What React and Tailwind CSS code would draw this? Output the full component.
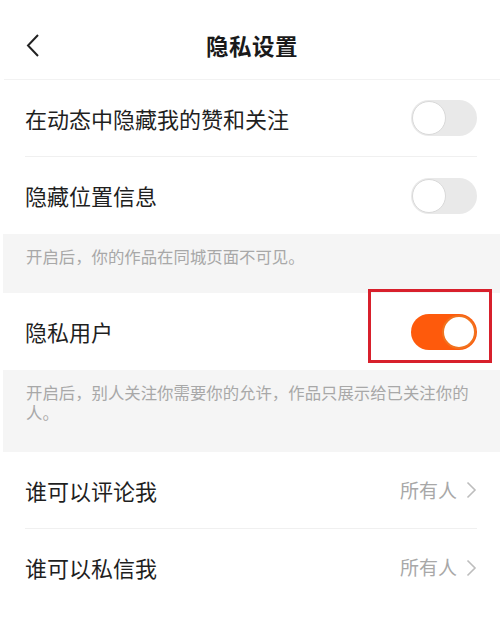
const font = { fontFamily: '"Noto Sans CJK SC", "Noto Sans", sans-serif' };

const Toggle = ({ on }) => {
  if (on) {
    return (
      <div className="w-[66px] h-[36px] rounded-full bg-[#fe5a0c] flex items-center justify-end p-[1px]">
        <div className="w-[34px] h-[34px] rounded-full bg-white border-2 border-[#f0731f]" />
      </div>
    );
  }
  return (
    <div className="w-[66px] h-[36px] rounded-full bg-[#e9e9e9] flex items-center p-[1px]">
      <div className="w-[34px] h-[34px] rounded-full bg-white border border-[#d9d9d9]" />
    </div>
  );
};

const Row = ({ label, children, divider }) => (
  <div className="pl-[25px] pr-[23px] bg-white">
    <div
      className={
        "h-[77px] flex items-center justify-between " +
        (divider ? "border-b border-[#f0f0f0]" : "")
      }
    >
      <span className="text-[22px] text-[#1f1f1f]">{label}</span>
      {children}
    </div>
  </div>
);

const Note = ({ children, h }) => (
  <div className={"ml-[3px] bg-[#f5f5f5] pl-[23px] pr-[20px] pt-[12px] " + h}>
    <p className="text-[16.4px] leading-[20px] text-[#a8a8a8]">{children}</p>
  </div>
);

const Value = () => (
  <div className="flex items-center gap-[9px] text-[19px] text-[#a8a8a8]">
    <span>所有人</span>
    <svg width="11" height="18" viewBox="0 0 11 18" fill="none">
      <path d="M1.5 1.5 L9 9 L1.5 16.5" stroke="#bdbdbd" strokeWidth="1.6" />
    </svg>
  </div>
);

export default function App() {
  return (
    <div className="w-[500px] h-[626px] bg-white overflow-hidden" style={font}>
      <div className="h-[80px] border-b border-[#f2f2f2] ml-[4px] relative flex items-center justify-center">
        <svg
          className="absolute left-[21px] top-[33px]"
          width="16"
          height="26"
          viewBox="0 0 16 26"
          fill="none"
        >
          <path d="M13 2 L3 12.5 L13 23" stroke="#222" strokeWidth="2" />
        </svg>
        <h1 className="text-[22.5px] font-bold text-[#1a1a1a] tracking-[0.5px] mt-[12px]">
          隐私设置
        </h1>
      </div>
      <Row label="在动态中隐藏我的赞和关注" divider>
        <Toggle />
      </Row>
      <Row label="隐藏位置信息">
        <Toggle />
      </Row>
      <Note h="h-[59px]">开启后，你的作品在同城页面不可见。</Note>
      <Row label="隐私用户">
        <div className="relative">
          <div className="absolute -left-[43px] -right-[15px] -top-[25px] -bottom-[13px] border-[3px] border-[#d8202c]" />
          <Toggle on />
        </div>
      </Row>
      <Note h="h-[82px]">
        开启后，别人关注你需要你的允许，作品只展示给已关注你的人。
      </Note>
      <Row label="谁可以评论我" divider>
        <Value />
      </Row>
      <Row label="谁可以私信我">
        <Value />
      </Row>
    </div>
  );
}
